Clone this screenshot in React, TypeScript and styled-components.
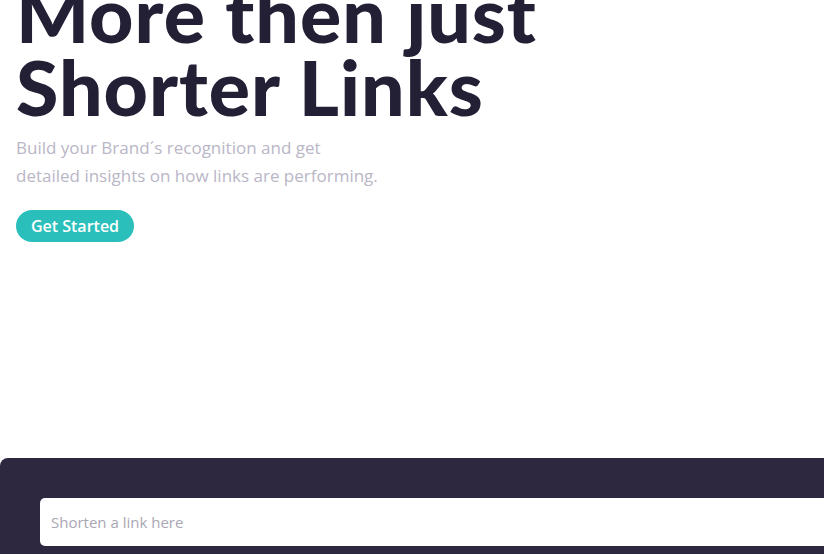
import React from "react";
import styled, { createGlobalStyle } from "styled-components";

const Global = createGlobalStyle`
  html, body { margin: 0; padding: 0; background: #ffffff; overflow: hidden; }
  body { font-family: "Open Sans", "Noto Sans", sans-serif; }
  * { box-sizing: border-box; }
`;

const Page = styled.main`
  width: 100%;
  height: 554px;
  overflow: hidden;
  display: flex;
  flex-direction: column;
`;

const Hero = styled.section`
  display: flex;
  flex-direction: column;
  align-items: flex-start;
  padding-left: 16px;
  height: 458px;
`;

const Title = styled.h1`
  margin: -23px 0 0 0;
  font-family: "Lato", sans-serif;
  font-weight: 900;
  font-size: 77px;
  line-height: 73px;
  letter-spacing: 1px;
  color: #232036;
`;

const Lead = styled.p`
  margin: 11px 0 0 0;
  font-size: 17px;
  line-height: 28px;
  color: #b9b6c6;
  max-width: 370px;
`;

const CTA = styled.button`
  margin-top: 20px;
  height: 32px;
  width: 118px;
  border: none;
  border-radius: 16px;
  background: #2bbfbc;
  color: #ffffff;
  font-family: "Open Sans", sans-serif;
  font-weight: 600;
  font-size: 16px;
  cursor: pointer;
`;

const Band = styled.section`
  flex: 1;
  width: calc(100% + 40px);
  background: #2d2840;
  border-radius: 8px 0 0 0;
  padding: 40px 0 0 40px;
`;

const Field = styled.input`
  width: 100%;
  height: 48px;
  border: none;
  border-radius: 5px;
  padding: 0 11px;
  font-family: "Open Sans", sans-serif;
  font-size: 15px;
  color: #232036;
  outline: none;
  &::placeholder { color: #a9a7b3; }
`;

export default function App() {
  return (
    <Page>
      <Global />
      <Hero>
        <Title>
          More then just
          <br />
          Shorter Links
        </Title>
        <Lead>
          Build your Brand´s recognition and get detailed insights on how links are performing.
        </Lead>
        <CTA>Get Started</CTA>
      </Hero>
      <Band>
        <Field placeholder="Shorten a link here" />
      </Band>
    </Page>
  );
}
